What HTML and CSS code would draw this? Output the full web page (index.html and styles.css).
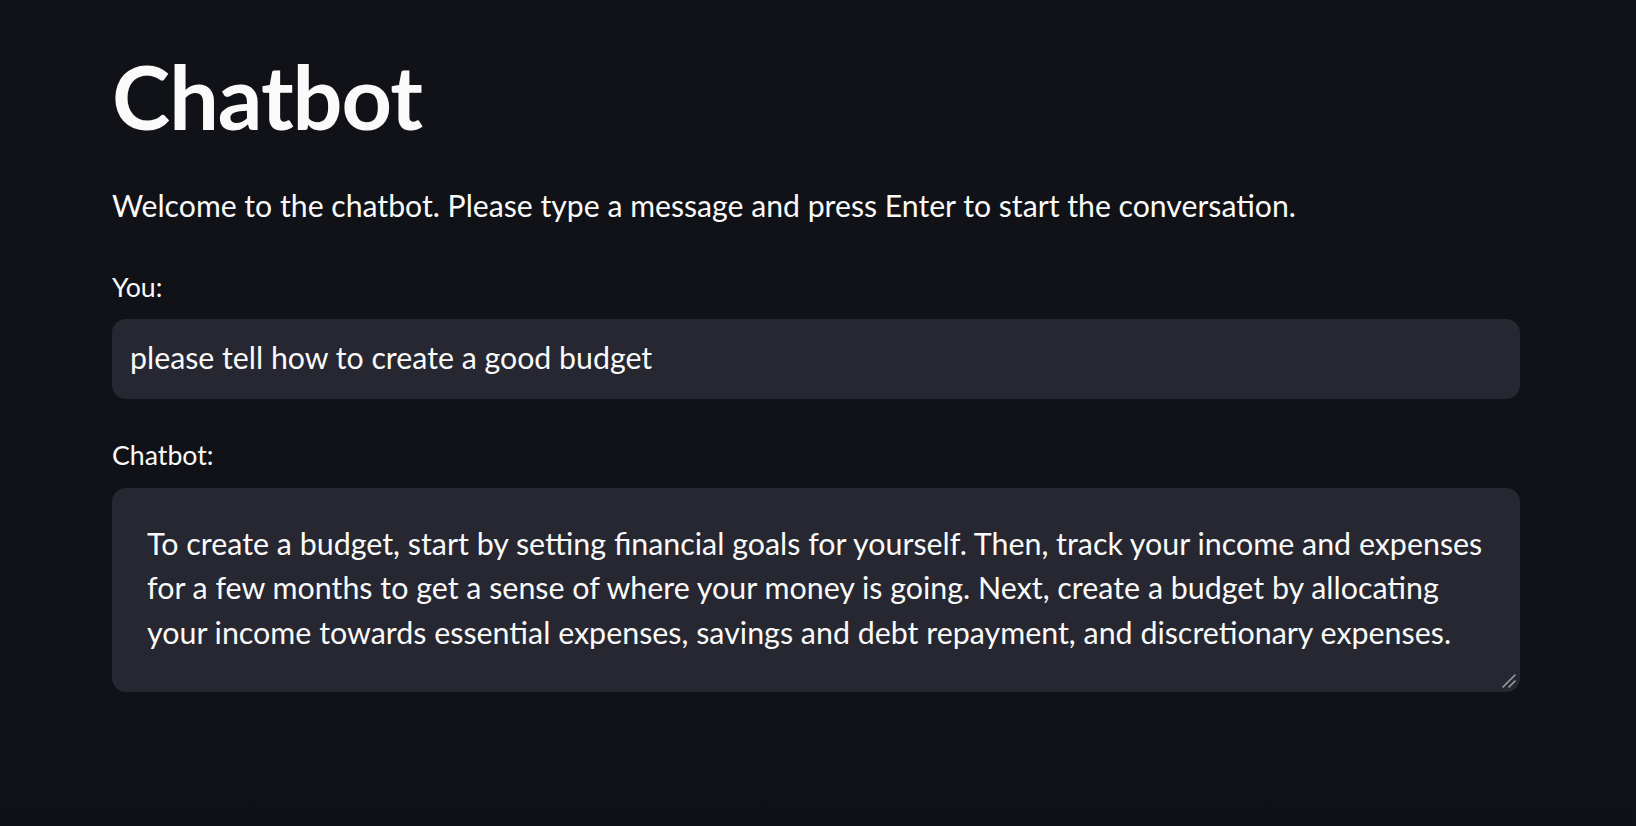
FILE: index.html
```html
<!DOCTYPE html>
<html lang="en">
<head>
<meta charset="utf-8">
<title>Chatbot</title>
<link rel="stylesheet" href="styles.css">
</head>
<body>
<main class="app">
  <h1 class="title">Chatbot</h1>
  <p class="intro">Welcome to the chatbot. Please type a message and press Enter to start the conversation.</p>
  <div class="field">
    <label class="label" for="you">You:</label>
    <div class="input-box"><input id="you" class="input" type="text" value="please tell how to create a good budget"></div>
  </div>
  <div class="field">
    <label class="label">Chatbot:</label>
    <div class="textarea">
      <span class="line">To create a budget, start by setting financial goals for yourself. Then, track your income and expenses</span>
      <span class="line">for a few months to get a sense of where your money is going. Next, create a budget by allocating</span>
      <span class="line">your income towards essential expenses, savings and debt repayment, and discretionary expenses.</span>
      <svg class="grip" width="14" height="14" viewBox="0 0 14 14"><path d="M1 13 L13 1 M7 13 L13 7" stroke="#9a9ba3" stroke-width="1.6" stroke-linecap="round"/></svg>
    </div>
  </div>
</main>
</body>
</html>
```

FILE: styles.css
```css
html, body {
  margin: 0;
  padding: 0;
}
body {
  background: linear-gradient(180deg, #111217 0%, #101217 60%, #0e1118 100%);
  min-height: 826px;
  color: #fafafa;
  font-family: Lato, "Liberation Sans", sans-serif;
}
.app {
  width: 1408px;
  padding: 0 0 0 112px;
  display: flex;
  flex-direction: column;
}
.title {
  margin: 0;
  padding-top: 50px;
  font-size: 88px;
  line-height: 92px;
  font-weight: 700;
  letter-spacing: -1px;
}
.intro {
  margin: 43px 0 5.5px 0;
  font-size: 30.2px;
  line-height: 40px;
}
.field {
  display: flex;
  flex-direction: column;
  margin-top: 39px;
}
.label {
  font-size: 26.7px;
  line-height: 34px;
  height: 49.5px;
}
.input-box {
  height: 80px;
  background: #262730;
  border-radius: 14px;
  display: flex;
  align-items: center;
}
.input {
  flex: 1;
  background: transparent;
  border: 0;
  outline: none;
  color: #fafafa;
  font-family: inherit;
  font-size: 30.3px;
  padding: 0 18px 4px 18px;
}
.textarea {
  position: relative;
  height: 204px;
  box-sizing: border-box;
  background: #262730;
  border-radius: 14px;
  padding: 33px 35px;
  display: flex;
  flex-direction: column;
  font-size: 30.4px;
  line-height: 44.8px;
}
.line {
  white-space: nowrap;
}
.grip {
  position: absolute;
  right: 4px;
  bottom: 4px;
}
```
